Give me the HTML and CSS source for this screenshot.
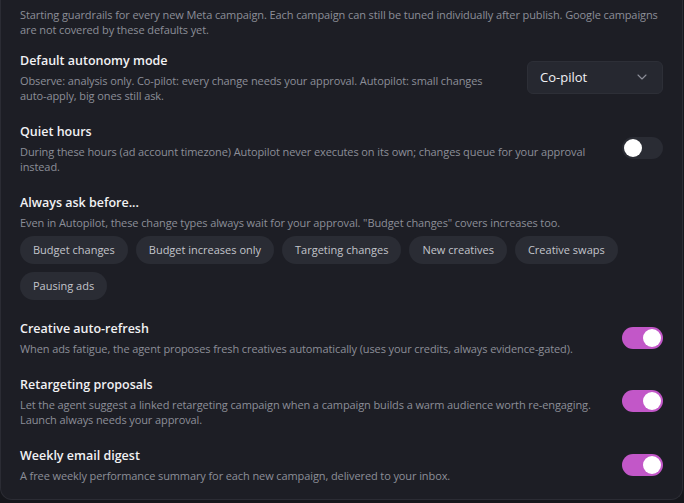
FILE: index.html
```html
<!DOCTYPE html>
<html lang="en">
<head>
<meta charset="utf-8">
<title>Campaign defaults</title>
<link rel="stylesheet" href="styles.css">
</head>
<body>
<section class="card">
  <p class="intro">Starting guardrails for every new Meta campaign. Each campaign can still be tuned individually after publish. Google campaigns are not covered by these defaults yet.</p>

  <div class="row">
    <div class="text">
      <div class="title">Default autonomy mode</div>
      <div class="desc">Observe: analysis only. Co-pilot: every change needs your approval. Autopilot: small changes auto-apply, big ones still ask.</div>
    </div>
    <div class="select">
      <span>Co-pilot</span>
      <svg width="10" height="6" viewBox="0 0 10 6"><path d="M1 1l4 4 4-4" fill="none" stroke="#8d8f99" stroke-width="1.1" stroke-linecap="round" stroke-linejoin="round"/></svg>
    </div>
  </div>

  <div class="row">
    <div class="text">
      <div class="title">Quiet hours</div>
      <div class="desc">During these hours (ad account timezone) Autopilot never executes on its own; changes queue for your approval instead.</div>
    </div>
    <span class="toggle"></span>
  </div>

  <div class="row">
    <div class="text">
      <div class="title">Always ask before...</div>
      <div class="desc">Even in Autopilot, these change types always wait for your approval. "Budget changes" covers increases too.</div>
      <div class="chips">
        <span class="chip">Budget changes</span>
        <span class="chip">Budget increases only</span>
        <span class="chip">Targeting changes</span>
        <span class="chip">New creatives</span>
        <span class="chip">Creative swaps</span>
        <span class="chip">Pausing ads</span>
      </div>
    </div>
  </div>

  <div class="row">
    <div class="text">
      <div class="title">Creative auto-refresh</div>
      <div class="desc">When ads fatigue, the agent proposes fresh creatives automatically (uses your credits, always evidence-gated).</div>
    </div>
    <span class="toggle on"></span>
  </div>

  <div class="row">
    <div class="text">
      <div class="title">Retargeting proposals</div>
      <div class="desc">Let the agent suggest a linked retargeting campaign when a campaign builds a warm audience worth re-engaging. Launch always needs your approval.</div>
    </div>
    <span class="toggle on"></span>
  </div>

  <div class="row">
    <div class="text">
      <div class="title">Weekly email digest</div>
      <div class="desc">A free weekly performance summary for each new campaign, delivered to your inbox.</div>
    </div>
    <span class="toggle on"></span>
  </div>
</section>
</body>
</html>
```

FILE: styles.css
```css
body {
  margin: 0;
  background: #15161b;
  font-family: "Open Sans", "Noto Sans", sans-serif;
  color: #f1f1f4;
}

.card {
  width: 683px;
  box-sizing: border-box;
  background: #1d1e25;
  border: 1px solid #2b2c34;
  border-top: 0;
  border-radius: 0 0 12px 12px;
  padding: 7px 19px 16px 19px;
  display: flex;
  flex-direction: column;
  gap: 19px;
}

.intro {
  margin: 0 0 -5px 0;
  font-size: 11px;
  letter-spacing: -0.1px;
  line-height: 15px;
  color: #8c8e98;
}

.row {
  display: flex;
  align-items: center;
  gap: 24px;
}

.text {
  flex: 1;
  min-width: 0;
}

.title {
  font-size: 12.5px;
  font-weight: 600;
  line-height: 20px;
  margin-bottom: 2px;
}

.desc {
  font-size: 11px;
  letter-spacing: -0.1px;
  line-height: 15px;
  color: #8c8e98;
}

.select {
  width: 136px;
  height: 33px;
  box-sizing: border-box;
  background: #262830;
  border: 1px solid #2d2f37;
  border-radius: 6px;
  display: flex;
  align-items: center;
  justify-content: space-between;
  padding: 0 15px 0 12px;
  font-size: 13px;
  flex-shrink: 0;
}

.chips {
  display: flex;
  flex-wrap: wrap;
  gap: 8px;
  margin-top: 6px;
}

.chip {
  height: 28px;
  line-height: 28px;
  padding: 0 13px;
  border-radius: 14px;
  background: #2a2c34;
  color: #c2c4cb;
  font-size: 11px;
}

.toggle {
  position: relative;
  width: 41px;
  height: 22px;
  border-radius: 11px;
  background: #2a2c34;
  flex-shrink: 0;
}

.toggle::after {
  content: "";
  position: absolute;
  top: 2px;
  left: 2px;
  width: 18px;
  height: 18px;
  border-radius: 50%;
  background: #fff;
}

.toggle.on {
  background: #c257c8;
}

.toggle.on::after {
  left: 21px;
}
```
